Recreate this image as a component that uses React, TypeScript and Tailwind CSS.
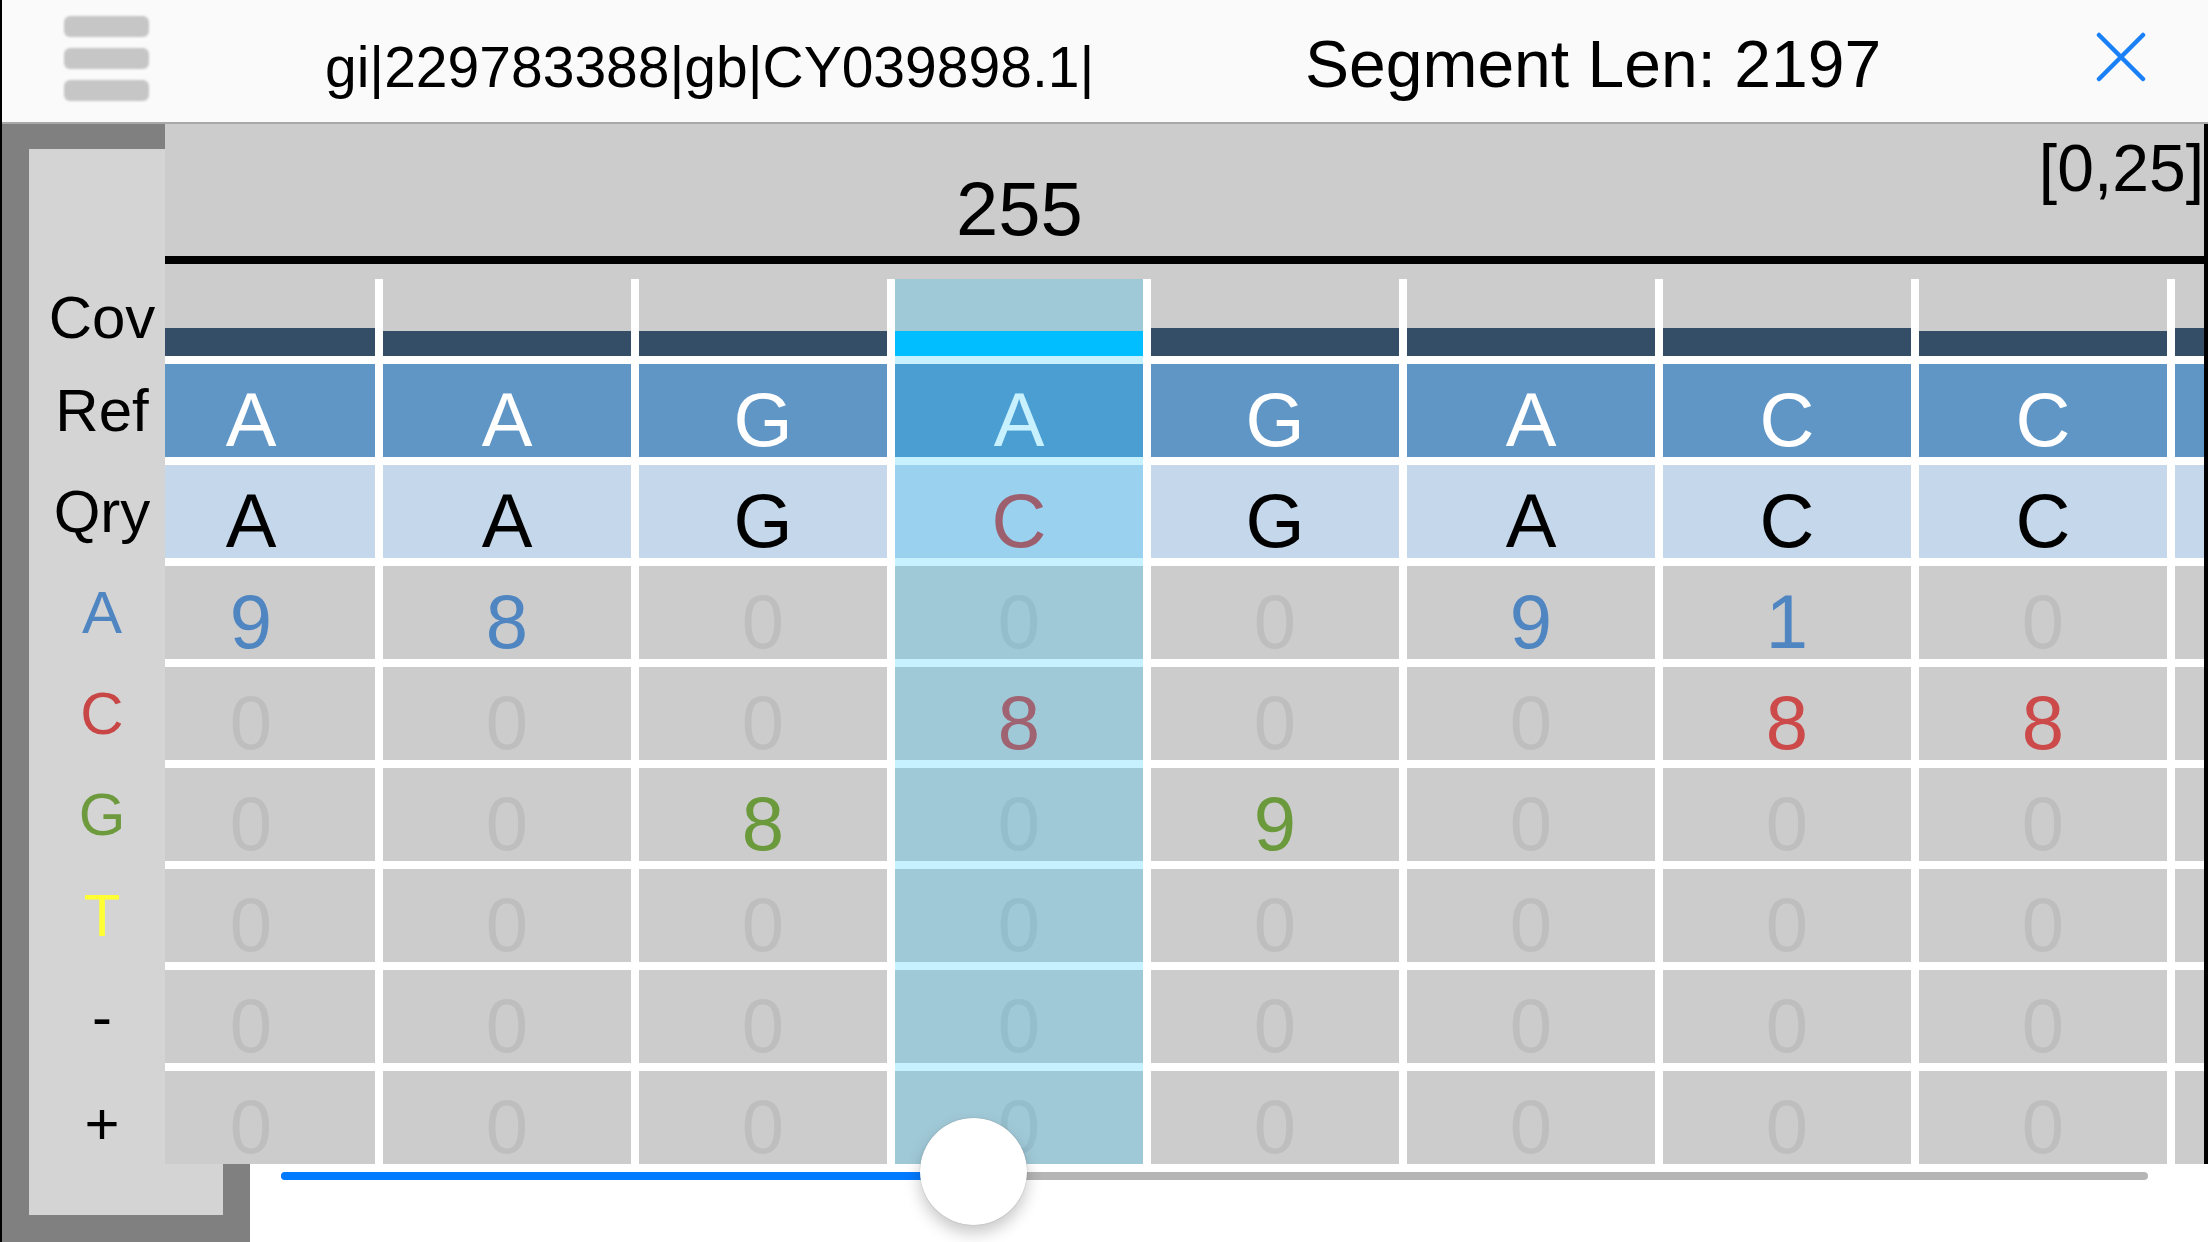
import React from 'react';

type Col = { ref: string; qry: string; counts: number[]; sel?: boolean; offscreen?: boolean };

const cols: Col[] = [
  { ref: 'A', qry: 'A', counts: [9, 0, 0, 0, 0, 0] },
  { ref: 'A', qry: 'A', counts: [8, 0, 0, 0, 0, 0] },
  { ref: 'G', qry: 'G', counts: [0, 0, 8, 0, 0, 0] },
  { ref: 'A', qry: 'C', counts: [0, 8, 0, 0, 0, 0], sel: true },
  { ref: 'G', qry: 'G', counts: [0, 0, 9, 0, 0, 0] },
  { ref: 'A', qry: 'A', counts: [9, 0, 0, 0, 0, 0] },
  { ref: 'C', qry: 'C', counts: [1, 8, 0, 0, 0, 0] },
  { ref: 'C', qry: 'C', counts: [0, 8, 0, 0, 0, 0] },
  { ref: 'A', qry: 'A', counts: [9, 0, 0, 0, 0, 0], offscreen: true },
];

const countColors = [
  'text-[#4f86c2]',
  'text-[#cc4a4a]',
  'text-[#6b9a3c]',
  'text-[#e6e62e]',
  'text-black',
  'text-black',
];

const labels = [
  { t: 'A', c: 'text-[#4f86c2]' },
  { t: 'C', c: 'text-[#c84646]' },
  { t: 'G', c: 'text-[#6e9a3e]' },
  { t: 'T', c: 'text-[#ffff33]' },
  { t: '-', c: 'text-black' },
  { t: '+', c: 'text-black pt-[12px]' },
];

const MAX_COV = 25;

function Column({ col }: { col: Col }) {
  const cov = col.counts.reduce((a, b) => a + b, 0);
  const barH = Math.round((cov / MAX_COV) * 77);
  const mismatch = col.ref !== col.qry;
  // the column past the right edge is only a sliver, its letters are off screen
  const show = !col.offscreen;
  return (
    <div className="relative flex w-[248px] shrink-0 flex-col gap-2">
      <div className="flex h-[77px] flex-col justify-end bg-[#cccccc]">
        <div className={col.sel ? 'bg-[#00bfff]' : 'bg-[#344e67]'} style={{ height: barH }} />
      </div>
      <div className="flex h-[93px] items-center justify-center bg-[#6096c6] pt-[19px] text-[76px] leading-[70px] text-white">
        {show && col.ref}
      </div>
      <div
        className={`flex h-[93px] items-center justify-center bg-[#c5d7ea] pt-[19px] text-[76px] leading-[70px] ${
          mismatch ? 'text-[#c84646]' : 'text-black'
        }`}
      >
        {show && col.qry}
      </div>
      {col.counts.map((n, i) => (
        <div
          key={i}
          className={`flex h-[93px] items-center justify-center bg-[#cccccc] pt-[19px] text-[76px] leading-[70px] ${
            n === 0 ? 'text-[#bebebe]' : countColors[i]
          }`}
        >
          {show && n}
        </div>
      ))}
      {col.sel && <div className="absolute inset-0 bg-[rgba(0,191,255,0.215)]" />}
    </div>
  );
}

export default function App() {
  return (
    <div className="flex h-[1242px] w-[2208px] flex-col overflow-hidden border-l-[2px] border-black bg-white font-['Liberation_Sans',Arial,sans-serif] text-black">
      {/* top bar */}
      <div className="flex h-[124px] shrink-0 items-start border-b-[2px] border-[#a8a8a8] bg-[#fafafa]">
        <div className="ml-[62px] mt-[16px] flex w-[85px] flex-col gap-[11px]">
          <div className="h-[21px] rounded-[6px] bg-[#c6c6c6] blur-[1px]" />
          <div className="h-[21px] rounded-[6px] bg-[#c6c6c6] blur-[1px]" />
          <div className="h-[21px] rounded-[6px] bg-[#c6c6c6] blur-[1px]" />
        </div>
        <div className="ml-[176px] mt-[39px] w-[980px] whitespace-nowrap text-[57px] leading-none">
          gi|229783388|gb|CY039898.1|
        </div>
        <div className="mt-[31px] whitespace-nowrap text-[66px] leading-none">Segment Len: 2197</div>
        <div className="ml-auto mr-[62px] mt-[32px]">
          <svg width="50" height="50" viewBox="0 0 50 50">
            <path d="M3 3 L47 47 M47 3 L3 47" stroke="#1a80f8" strokeWidth="4.5" strokeLinecap="round" fill="none" />
          </svg>
        </div>
      </div>

      {/* body */}
      <div className="flex min-h-0 flex-1">
        <div className="h-full w-[248px] shrink-0 border-x-[27px] border-b-[27px] border-t-[25px] border-[#808080] bg-[#d4d4d4]">
          <div className="mt-[130px] flex w-[146px] flex-col gap-2 text-[60px] leading-none">
            <div className="flex h-[77px] items-center justify-center">Cov</div>
            <div className="flex h-[93px] items-center justify-center">Ref</div>
            <div className="flex h-[93px] items-center justify-center">Qry</div>
            {labels.map((l) => (
              <div key={l.t} className={`flex h-[93px] items-center justify-center ${l.c}`}>
                {l.t}
              </div>
            ))}
          </div>
        </div>

        <div className="relative z-10 -ml-[85px] flex min-w-0 flex-1 flex-col">
          <div className="flex flex-col border-r-[4px] border-black">
            <div className="flex h-[132px] items-start bg-[#cccccc]">
              <div className="ml-[791px] mt-[47px] text-[76px] leading-none">255</div>
              <div className="ml-auto mt-[11px] text-[66px] leading-none">[0,25]</div>
            </div>
            <div className="h-2 bg-black" />
            <div className="h-[15px] bg-[#cccccc]" />
            <div className="h-[885px] overflow-x-clip">
              <div className="-ml-[38px] flex gap-2 bg-white">
                {cols.map((c, i) => (
                  <Column key={i} col={c} />
                ))}
              </div>
            </div>
          </div>

          {/* slider */}
          <div className="relative ml-[85px] flex-1 bg-white">
            <div className="ml-[31px] mr-[60px] mt-[8px] flex h-2 overflow-hidden rounded-full bg-[#b5b5b5]">
              <div className="w-[693px] bg-[#007aff]" />
            </div>
            <div className="absolute left-[670px] top-[-46px] h-[107px] w-[107px] rounded-full bg-white shadow-[0_8px_16px_rgba(0,0,0,0.22),0_0_1px_rgba(0,0,0,0.35)]" />
          </div>
        </div>
      </div>
    </div>
  );
}
